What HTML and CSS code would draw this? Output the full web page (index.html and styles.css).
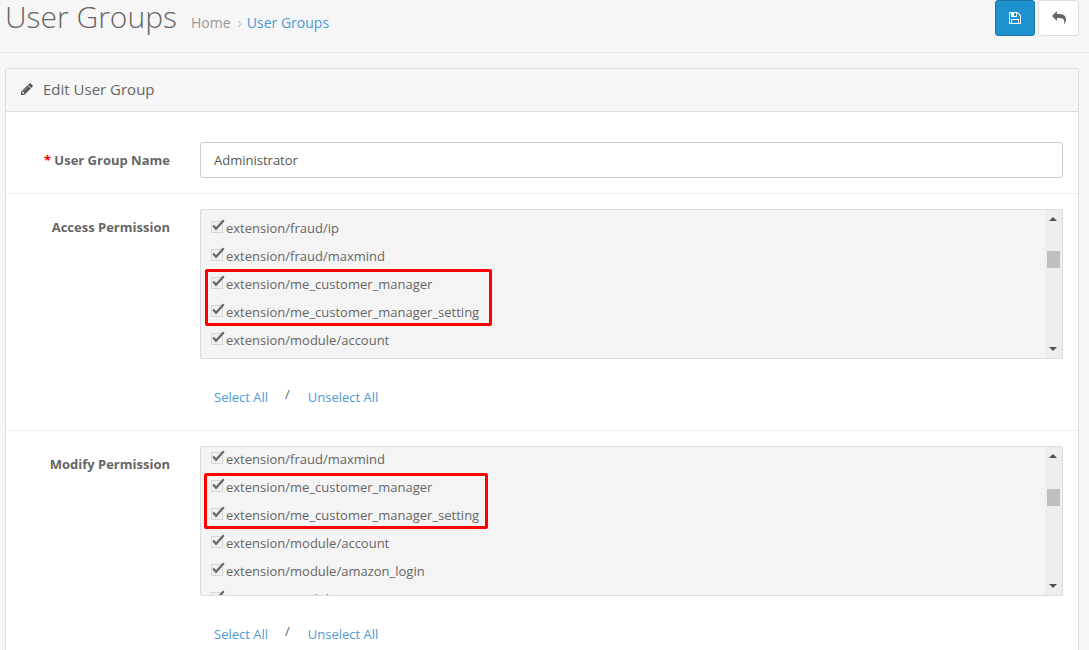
FILE: index.html
```html
<!DOCTYPE html>
<html lang="en">
<head>
<meta charset="utf-8">
<title>User Groups</title>
<link rel="stylesheet" href="styles.css">
</head>
<body>
<svg class="defs" width="0" height="0" aria-hidden="true">
  <symbol id="cb" viewBox="0 0 14 15">
    <rect x="0.5" y="2.5" width="11" height="11" fill="#f1f1f1" stroke="#d6d6d6"/>
    <path d="M2.2 6.5 L5 9.8 L12.8 1.2" fill="none" stroke="#666" stroke-width="2.2"/>
  </symbol>
</svg>
<header class="page-header">
  <div class="crumbs">
    <h1 class="title">User Groups</h1>
    <span class="crumb">Home</span>
    <span class="sep">›</span>
    <a class="crumb link">User Groups</a>
  </div>
  <div class="actions">
    <button class="btn primary" aria-label="Save">
      <svg class="ico" viewBox="0 0 1792 1792"><path fill="#fff" d="M512 1536h768v-384h-768v384zm896 0h128v-896q0-14-10-38.5t-20-34.5l-281-281q-10-10-34-20t-39-10v416q0 40-28 68t-68 28h-576q-40 0-68-28t-28-68v-416h-128v1280h128v-416q0-40 28-68t68-28h832q40 0 68 28t28 68v416zm-384-928v-320q0-13-9.5-22.5t-22.5-9.5h-192q-13 0-22.5 9.5t-9.5 22.5v320q0 13 9.5 22.5t22.5 9.5h192q13 0 22.5-9.5t9.5-22.5zm640 32v928q0 40-28 68t-68 28h-1344q-40 0-68-28t-28-68v-1344q0-40 28-68t68-28h928q40 0 88 20t76 48l280 280q28 28 48 76t20 88z"/></svg>
    </button>
    <button class="btn plain" aria-label="Back">
      <svg class="ico" viewBox="0 0 1792 1792"><path fill="#666" d="M1792 1120q0 166-127 451-3 7-10.5 24t-13.5 30-13 22q-12 17-28 17-15 0-23.5-10t-8.5-25q0-9 2.5-26.5t2.5-23.5q5-68 5-123 0-101-17.5-181t-48.5-138.5-80-101-105.5-69.5-133-42.5-154-21.5-175.5-6h-224v256q0 26-19 45t-45 19-45-19l-512-512q-19-19-19-45t19-45l512-512q19-19 45-19t45 19 19 45v256h224q713 0 875 403 53 134 53 333z"/></svg>
    </button>
  </div>
</header>
<main class="panel">
  <div class="panel-heading">
    <svg class="pencil" viewBox="0 0 1792 1792"><path fill="#555" d="M491 1536l91-91-235-235-91 91v107h128v128h107zm523-928q0-22-22-22-10 0-17 7l-542 542q-7 7-7 17 0 22 22 22 10 0 17-7l542-542q7-7 7-17zm-54-192l416 416-832 832h-416v-416zm683 96q0 53-37 90l-166 166-416-416 166-165q36-38 90-38 53 0 91 38l235 234q37 39 37 91z"/></svg>
    <span>Edit User Group</span>
  </div>
  <div class="row name-row">
    <label class="label"><span class="req">*</span> User Group Name</label>
    <input class="input" type="text" value="Administrator">
  </div>
  <div class="row perm-row">
    <label class="label">Access Permission</label>
    <div class="field">
      <div class="well">
        <ul class="list">
          <li class="item"><svg class="cb"><use href="#cb"/></svg>extension/fraud/ip</li>
          <li class="item"><svg class="cb"><use href="#cb"/></svg>extension/fraud/maxmind</li>
          <li class="item"><svg class="cb"><use href="#cb"/></svg>extension/me_customer_manager</li>
          <li class="item"><svg class="cb"><use href="#cb"/></svg>extension/me_customer_manager_setting</li>
          <li class="item"><svg class="cb"><use href="#cb"/></svg>extension/module/account</li>
        </ul>
        <div class="scrollbar">
          <span class="arrow up"></span>
          <span class="thumb access"></span>
          <span class="arrow down"></span>
        </div>
        <div class="mark access"></div>
      </div>
      <div class="links"><a class="link">Select All</a><span class="slash">/</span><a class="link">Unselect All</a></div>
    </div>
  </div>
  <div class="row perm-row">
    <label class="label">Modify Permission</label>
    <div class="field">
      <div class="well">
        <ul class="list shifted">
          <li class="item"><svg class="cb"><use href="#cb"/></svg>extension/fraud/maxmind</li>
          <li class="item"><svg class="cb"><use href="#cb"/></svg>extension/me_customer_manager</li>
          <li class="item"><svg class="cb"><use href="#cb"/></svg>extension/me_customer_manager_setting</li>
          <li class="item"><svg class="cb"><use href="#cb"/></svg>extension/module/account</li>
          <li class="item"><svg class="cb"><use href="#cb"/></svg>extension/module/amazon_login</li>
          <li class="item"><svg class="cb"><use href="#cb"/></svg>extension/module/amazon_pay</li>
        </ul>
        <div class="scrollbar">
          <span class="arrow up"></span>
          <span class="thumb modify"></span>
          <span class="arrow down"></span>
        </div>
        <div class="mark modify"></div>
      </div>
      <div class="links"><a class="link">Select All</a><span class="slash">/</span><a class="link">Unselect All</a></div>
    </div>
  </div>
</main>
</body>
</html>
```
FILE: styles.css
```css
* { box-sizing: border-box; }
html, body { height: 650px; overflow: hidden; }
body {
  margin: 0;
  background: #f6f6f6;
  font-family: "Open Sans", sans-serif;
  font-size: 13px;
  color: #666;
}
.defs { position: absolute; }
.page-header {
  height: 53px;
  border-bottom: 1px solid #e6e6e6;
  display: flex;
  justify-content: space-between;
  padding: 0 10px 0 5px;
}
.crumbs { display: flex; align-items: baseline; height: 34px; }
.title {
  margin: 0 14px 0 0;
  font-size: 30px;
  font-weight: 300;
  line-height: 34px;
  color: #666;
}
.crumb { font-size: 14px; color: #999; }
.sep { margin: 0 5px 0 7px; font-size: 14px; color: #bbb; }
.link { color: #4a9ad4; }
.actions { display: flex; gap: 3px; height: 36px; }
.btn {
  width: 41px;
  height: 36px;
  padding: 0;
  border-radius: 3px;
  display: flex;
  align-items: center;
  justify-content: center;
}
.primary { background: #1e91cf; border: 1px solid #1978ab; width: 40px; }
.plain { background: #fff; border: 1px solid #ddd; }
.ico { width: 14px; height: 14px; }
.panel {
  margin: 15px 10px 0 5px;
  border: 1px solid #ddd;
  background: #fff;
  border-radius: 2px 2px 0 0;
}
.panel-heading {
  height: 43px;
  background: #f6f6f6;
  border-bottom: 1px solid #ddd;
  display: flex;
  align-items: center;
  padding: 0 0 2px 14px;
  font-size: 15px;
  color: #666;
  gap: 9px;
}
.pencil { width: 14px; height: 14px; }
.row {
  display: grid;
  grid-template-columns: 164px 1fr;
  column-gap: 30px;
  padding-right: 15px;
}
.name-row { height: 82px; padding-top: 30px; border-bottom: 1px solid #ededed; }
.perm-row { height: 237px; padding-top: 15px; border-bottom: 1px solid #ededed; }
.label {
  font-weight: 700;
  font-size: 13px;
  line-height: 18px;
  text-align: right;
  color: #666;
  padding-top: 9px;
}
.req { color: #f00; }
.input {
  height: 36px;
  border: 1px solid #ccc;
  border-radius: 3px;
  padding: 0 13px;
  font: 13px "Open Sans", sans-serif;
  color: #555;
  width: 100%;
}
.well {
  position: relative;
  height: 150px;
  background: #f4f4f4;
  border: 1px solid #ddd;
  border-radius: 2px;
  display: flex;
  overflow: hidden;
}
.list {
  list-style: none;
  margin: 0;
  padding: 4px 0 0 10px;
  flex: 1;
  overflow: hidden;
}
.list.shifted { padding-top: 0; margin-top: -2px; }
.item {
  height: 28px;
  line-height: 28px;
  display: flex;
  align-items: center;
  color: #666;
  white-space: nowrap;
}
.cb { width: 14px; height: 15px; margin: -3px 1px 0 0; flex: none; }
.scrollbar {
  width: 17px;
  flex: none;
  background: #eeeeee;
  position: relative;
}
.arrow {
  position: absolute;
  left: 4px;
  width: 0;
  height: 0;
  border-left: 4px solid transparent;
  border-right: 4px solid transparent;
}
.arrow.up { top: 7px; border-bottom: 4px solid #505050; }
.arrow.down { bottom: 7px; border-top: 4px solid #505050; }
.thumb {
  position: absolute;
  left: 2px;
  width: 13px;
  height: 17px;
  background: #bfbfbf;
}
.thumb.access { top: 41px; }
.thumb.modify { top: 42px; }
.mark {
  position: absolute;
  border: 3px solid #f00;
  border-radius: 2px;
  pointer-events: none;
}
.mark.access { left: 4px; top: 59px; width: 287px; height: 57px; }
.mark.modify { left: 3px; top: 26px; width: 284px; height: 56px; }
.links {
  display: flex;
  margin-top: 29px;
  padding-left: 14px;
  line-height: 18px;
}
.slash { margin: -3px 18px 0 17px; color: #666; }
```
